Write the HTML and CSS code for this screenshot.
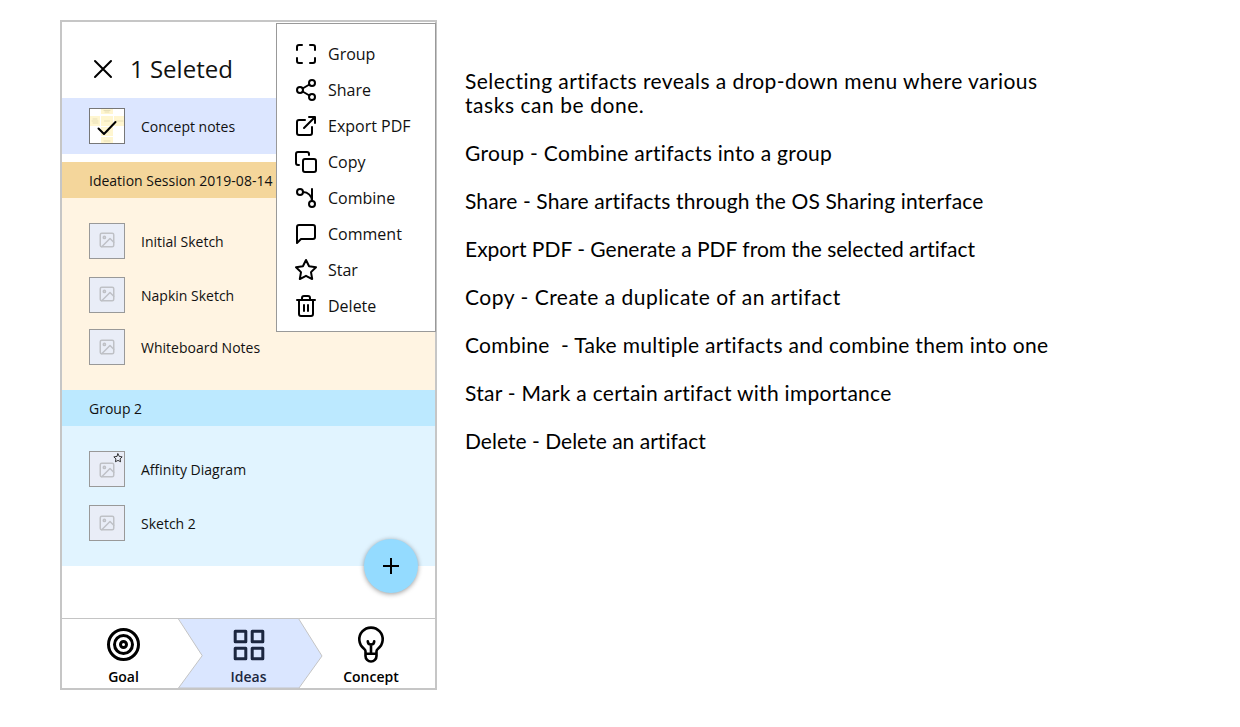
FILE: index.html
```html
<!DOCTYPE html>
<html lang="en">
<head>
<meta charset="utf-8">
<title>Artifact selection menu</title>
<link rel="stylesheet" href="styles.css">
</head>
<body>
<svg class="defs" aria-hidden="true">
  <symbol id="picture" viewBox="0 0 24 24"><rect x="3" y="3" width="18" height="18" rx="2"/><circle cx="8.5" cy="8.5" r="1.5"/><path d="M21 15l-5-5L5 21"/></symbol>
  <symbol id="star" viewBox="0 0 24 24"><path d="M12 2l3.09 6.26L22 9.27l-5 4.87 1.18 6.88L12 17.77l-6.18 3.25L7 14.14 2 9.27l6.91-1.01z"/></symbol>
</svg>
<main class="page">
  <section class="phone">
    <header class="topbar">
      <svg class="close" viewBox="0 0 24 24"><path d="M4 4l16 16M20 4L4 20"/></svg>
      <h1 class="title">1 Seleted</h1>
    </header>
    <div class="row selected">
      <span class="thumb note">
        <svg class="note-art" viewBox="0 0 34 34">
          <path class="paper" d="M11 0h12v5H11zM0 7h10v10H0zM11 7h12v10H11zM24 7h10v10H24zM11 18h12v9H11zM11 28h12v6H11z"/>
          <path class="scribble" d="M14 1.5h6M15 3h4M3 10h4M2 12h6M3 14h5M14.500 12h5M26 12h7M15 23h4M14 32h6"/>
          <path class="check" d="M8.500 19.500l5.500 5.500L25.500 13"/>
        </svg>
      </span>
      <span class="label">Concept notes</span>
    </div>
    <h2 class="group-title amber">Ideation Session 2019-08-14</h2>
    <div class="group cream">
      <div class="row"><span class="thumb high"><svg class="pic"><use href="#picture"/></svg></span><span class="label">Initial Sketch</span></div>
      <div class="row"><span class="thumb high"><svg class="pic"><use href="#picture"/></svg></span><span class="label">Napkin Sketch</span></div>
      <div class="row"><span class="thumb"><svg class="pic"><use href="#picture"/></svg></span><span class="label">Whiteboard Notes</span></div>
    </div>
    <h2 class="group-title sky">Group 2</h2>
    <div class="group ice">
      <div class="row"><span class="thumb low"><svg class="pic"><use href="#picture"/></svg><svg class="badge"><use href="#star"/></svg></span><span class="label">Affinity Diagram</span></div>
      <div class="row"><span class="thumb"><svg class="pic"><use href="#picture"/></svg></span><span class="label">Sketch 2</span></div>
    </div>
    <button class="fab" aria-label="Add"><svg viewBox="0 0 16 16"><path d="M8 0v16M0 8h16"/></svg></button>
    <nav class="tabs">
      <svg class="arrow" viewBox="0 0 146 70"><path d="M.5 .5H120.500L144 38 121 70H.5L24 38z"/></svg>
      <a class="tab goal"><svg class="tab-icon" viewBox="0 0 36 36"><circle cx="17.500" cy="17.500" r="15"/><circle cx="17.500" cy="17.500" r="9"/><circle cx="17.500" cy="17.500" r="3"/></svg><span>Goal</span></a>
      <a class="tab ideas"><svg class="tab-icon" viewBox="0 0 36 36"><path d="M4.200 4.200h10.600v10.600H4.200zM21.200 4.200h10.600v10.600H21.200zM4.200 21.200h10.600v10.600H4.200zM21.200 21.200h10.600v10.600H21.200z"/></svg><span>Ideas</span></a>
      <a class="tab concept"><svg class="tab-icon bulb" viewBox="0 0 36 36"><path d="M12.500 26.700v-2.500c0-1-.6-1.800-1.500-2.500A11.700 11.700 0 1 1 25 21.700c-.9.700-1.500 1.500-1.500 2.500v4.800a5.500 5.500 0 0 1-11 0zM12.500 26.700h11M18 26V17.500M14.800 14.200c0 2 1.200 3.300 3.200 3.300s3.200-1.300 3.200-3.300"/></svg><span>Concept</span></a>
    </nav>
    <ul class="menu">
      <li><svg viewBox="0 0 24 24"><path d="M8 3H5a2 2 0 0 0-2 2v3m18 0V5a2 2 0 0 0-2-2h-3m0 18h3a2 2 0 0 0 2-2v-3M3 16v3a2 2 0 0 0 2 2h3"/></svg>Group</li>
      <li><svg viewBox="0 0 24 24"><circle cx="18" cy="5" r="3"/><circle cx="6" cy="12" r="3"/><circle cx="18" cy="19" r="3"/><path d="M8.590 13.510l6.830 3.980M15.410 6.510l-6.820 3.980"/></svg>Share</li>
      <li><svg viewBox="0 0 24 24"><path d="M18 13v6a2 2 0 0 1-2 2H5a2 2 0 0 1-2-2V8a2 2 0 0 1 2-2h6M15 3h6v6M10 14L21 3"/></svg>Export PDF</li>
      <li><svg viewBox="0 0 24 24"><rect x="9" y="9" width="13" height="13" rx="2"/><path d="M5 15H4a2 2 0 0 1-2-2V4a2 2 0 0 1 2-2h9a2 2 0 0 1 2 2v1"/></svg>Copy</li>
      <li><svg viewBox="0 0 24 24"><circle cx="6" cy="6" r="3"/><circle cx="18" cy="18" r="3"/><path d="M18 3v12M9 6a9 9 0 0 1 9 9"/></svg>Combine</li>
      <li><svg viewBox="0 0 24 24"><path d="M21 15a2 2 0 0 1-2 2H7l-4 4V5a2 2 0 0 1 2-2h14a2 2 0 0 1 2 2z"/></svg>Comment</li>
      <li><svg><use href="#star"/></svg>Star</li>
      <li><svg viewBox="0 0 24 24"><path d="M3 6h18M19 6v14a2 2 0 0 1-2 2H7a2 2 0 0 1-2-2V6m3 0V4a2 2 0 0 1 2-2h4a2 2 0 0 1 2 2v2M10 11v6M14 11v6"/></svg>Delete</li>
    </ul>
  </section>
  <article class="notes">
    <p><span class="intro-first">Selecting artifacts reveals a drop-down menu where various</span><br><span class="intro-last">tasks can be done.</span></p>
    <p class="note-group">Group - Combine artifacts into a group</p>
    <p class="note-share">Share - Share artifacts through the OS Sharing interface</p>
    <p class="note-export">Export PDF - Generate a PDF from the selected artifact</p>
    <p class="note-copy">Copy - Create a duplicate of an artifact</p>
    <p class="note-combine">Combine&nbsp; - Take multiple artifacts and combine them into one</p>
    <p class="note-star">Star - Mark a certain artifact with importance</p>
    <p class="note-delete">Delete - Delete an artifact</p>
  </article>
</main>
</body>
</html>
```
FILE: styles.css
```css
* { box-sizing: border-box; margin: 0; padding: 0; }
body { background: #fff; color: #111; font-family: "Open Sans", sans-serif; }
svg { fill: none; stroke: currentColor; stroke-width: 2; stroke-linecap: round; stroke-linejoin: round; flex: none; display: block; }
.defs { position: absolute; width: 0; height: 0; }
.page { display: flex; width: 1240px; height: 727px; padding: 20px 0 0 60px; overflow: hidden; }

.phone { position: relative; display: flex; flex-direction: column; width: 377px; height: 670px; border: 2px solid #c6c6c6; }
.topbar { display: flex; align-items: center; height: 76px; padding: 18px 0 0 29px; }
.close { width: 24px; height: 24px; color: #000; }
.title { margin-left: 15px; font-size: 24px; font-weight: 400; line-height: 32px; }

.row { display: flex; align-items: center; height: 36px; padding-left: 27px; }
.selected { height: 56px; margin-bottom: 8px; background: #dce6ff; }
.thumb { position: relative; display: flex; align-items: center; justify-content: center; width: 36px; height: 36px; border: 1px solid #999; background: #e9edf7; }
.high { padding-bottom: 2px; }
.low { padding-top: 2px; }
.label { margin-left: 16px; padding-top: 2px; font-size: 14px; line-height: 20px; }
.pic { width: 18px; height: 18px; color: #bfc1c6; }
.note { border-color: #777; background: #fff; }
.note-art { width: 34px; height: 34px; }
.paper { fill: #fff6d0; stroke: none; }
.scribble { stroke: #ddd4ad; stroke-width: .7; }
.check { stroke: #000; }
.badge { position: absolute; top: 1px; right: 1px; width: 10px; height: 10px; color: #111; }
.group-title { height: 36px; padding-left: 27px; font-size: 14px; font-weight: 400; line-height: 37px; }
.amber { background: #f4d69b; }
.sky { background: #bce9ff; }
.group { display: flex; flex-direction: column; gap: 18px; padding-top: 25px; }
.cream { height: 192px; background: #fff4e2; }
.cream .row:last-child { margin-top: -2px; }
.ice { height: 140px; background: #e1f4ff; }
.fab { position: absolute; left: 302px; top: 517px; display: flex; align-items: center; justify-content: center; width: 54px; height: 54px; border: 0; border-radius: 50%; background: #94dbff; color: #000; box-shadow: 0 1px 5px rgba(0,0,0,.4); }
.fab svg { width: 16px; height: 16px; stroke-linecap: butt; }

.tabs { position: relative; height: 70px; margin-top: auto; border-top: 1px solid #c4c4c4; display: grid; grid-template-columns: 123px 127px 118px; }
.arrow { position: absolute; left: 116px; top: -1px; width: 146px; height: 70px; }
.arrow path { fill: #dae6ff; stroke: #c4c4c4; stroke-width: 1; }
.tab { position: relative; display: flex; flex-direction: column; align-items: center; padding-top: 8px; font-size: 14px; font-weight: 600; line-height: 20px; color: #000; }
.tab-icon { width: 36px; height: 36px; margin-bottom: 4px; stroke-width: 3; overflow: visible; }
.bulb { stroke-width: 2.6; }
.ideas { color: #1c2740; }

.menu { position: absolute; left: 214px; top: 1px; width: 160px; height: 309px; padding: 12px 0 0 17px; border: 1px solid #999; background: #fff; list-style: none; }
.menu li { display: flex; align-items: center; height: 36px; gap: 10px; font-size: 16px; }
.menu svg { width: 24px; height: 24px; color: #000; }

.notes { display: flex; flex-direction: column; gap: 24px; width: 620px; padding: 49px 0 0 28px; color: #000; font-family: Lato, sans-serif; font-size: 21px; line-height: 24px; white-space: nowrap; font-variant-ligatures: none; }
.intro-first { letter-spacing: .42px; }
.intro-last { letter-spacing: .55px; }
.note-group { letter-spacing: .31px; }
.note-share { letter-spacing: .14px; }
.note-export { letter-spacing: 0; }
.note-copy { letter-spacing: .51px; }
.note-combine { letter-spacing: .3px; }
.note-star { letter-spacing: .28px; }
.note-delete { letter-spacing: .02px; }
```
